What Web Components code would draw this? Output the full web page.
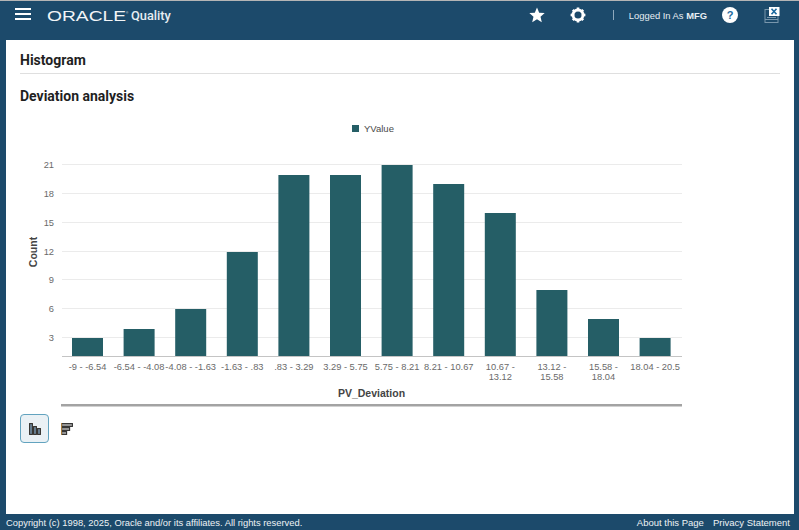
<!DOCTYPE html>
<html lang="en">
<head>
<meta charset="utf-8">
<title>Histogram</title>
<style>
  html, body { margin: 0; height: 100%; }
  body { font-family: "Liberation Sans", Arial, sans-serif; background: #1c4a6b; }
</style>
</head>
<body>
<app-shell>
  <app-header slot="header" user="MFG"></app-header>
  <page-panel title-text="Histogram" subtitle="Deviation analysis">
    <histogram-chart></histogram-chart>
    <chart-toggle></chart-toggle>
  </page-panel>
  <app-footer slot="footer"></app-footer>
</app-shell>
<script>
class AppShell extends HTMLElement {
  constructor() {
    super();
    this.attachShadow({ mode: 'open' });
    this.shadowRoot.innerHTML = `
      <style>
        :host {
          display: flex;
          flex-direction: column;
          height: 530px;
          background: #1c4a6b;
          border-top: 1px solid #b5b5b5;
          box-sizing: border-box;
          overflow: hidden;
        }
        main { flex: 1; display: flex; min-height: 0; padding: 0 5px 0 6px; }
      </style>
      <slot name="header"></slot>
      <main><slot></slot></main>
      <slot name="footer"></slot>
    `;
  }
}
customElements.define('app-shell', AppShell);

class AppHeader extends HTMLElement {
  constructor() {
    super();
    this.attachShadow({ mode: 'open' });
    const user = this.getAttribute('user');
    this.shadowRoot.innerHTML = `
      <style>
        :host {
          display: flex;
          align-items: flex-start;
          height: 39px;
          color: #fff;
          box-sizing: border-box;
          font-family: "Liberation Sans", Arial, sans-serif;
        }
        .burger { display: block; margin: 7px 0 0 15px; width: 16px; height: 12px; }
        .logo { display: block; margin: 8px 0 0 16px; width: 82px; height: 13px; }
        .product { margin: 6px 0 0 2px; font: 500 12.8px/17px Roboto, "Liberation Sans", sans-serif; color: #e6edf2; }
        .tools { margin-left: auto; display: flex; align-items: flex-start; }
        svg.star { margin: 6px 0 0 0; }
        svg.gear { margin: 6px 0 0 25px; }
        .sep { width: 1px; height: 10px; margin: 9px 0 0 27px; background: #8fa9bc; }
        .login { margin: 8px 0 0 15px; font-size: 9.4px; line-height: 13px; color: #e8eef3; white-space: nowrap; }
        .login b { font-weight: bold; }
        svg.help { margin: 6px 0 0 15px; }
        svg.close { margin: 6px 19px 0 26px; }
      </style>
      <svg class="burger" viewBox="0 0 16 12"><path d="M0 1h16M0 6h16M0 11h16" stroke="#fff" stroke-width="2" fill="none"/></svg>
      <svg class="logo" viewBox="0 0 82 13">
        <text x="0" y="11.5" font-family="'Liberation Sans', sans-serif" font-size="14" fill="#f2f5f7" textLength="79" lengthAdjust="spacingAndGlyphs">ORACLE</text>
        <text x="79" y="5" font-family="'Liberation Sans', sans-serif" font-size="3" fill="#f2f5f7">®</text>
      </svg>
      <span class="product">Quality</span>
      <div class="tools">
        <svg class="star" width="16" height="16" viewBox="0 0 16 16"><path d="M8 .6l2.2 5.1 5.5.4-4.2 3.6 1.3 5.5L8 12.3l-4.8 2.9 1.3-5.5L.3 6.1l5.5-.4z" fill="#fff"/></svg>
        <svg class="gear" width="16" height="16" viewBox="0 0 16 16">
          <circle cx="8" cy="8" r="5" fill="none" stroke="#fff" stroke-width="3"/>
          <path d="M8 8V.6M8 8v7.4M8 8H.6M8 8h7.4M8 8L2.8 2.8M8 8l5.2 5.2M8 8l5.2-5.2M8 8l-5.2 5.2" stroke="#fff" stroke-width="2.6"/>
          <circle cx="8" cy="8" r="3.5" fill="#1c4a6b"/>
        </svg>
        <span class="sep"></span>
        <span class="login">Logged In As <b>${user}</b></span>
        <svg class="help" width="16" height="16" viewBox="0 0 16 16">
          <circle cx="8" cy="8" r="8" fill="#fff"/>
          <text x="8" y="12" text-anchor="middle" font-family="'Liberation Sans', sans-serif" font-weight="bold" font-size="11" fill="#1c6aa0">?</text>
        </svg>
        <svg class="close" width="16" height="17" viewBox="0 0 16 17">
          <rect x="1" y="2.5" width="13" height="13" fill="none" stroke="#7896ac" stroke-width="1"/>
          <path d="M1 12.5h13M3 10.5h9" stroke="#7896ac"/>
          <rect x="5" y="0" width="10.5" height="9" fill="#fff"/>
          <path d="M7.5 1.7l5 5.6M12.5 1.7l-5 5.6" stroke="#1c6aa0" stroke-width="1.6"/>
        </svg>
      </div>
    `;
  }
}
customElements.define('app-header', AppHeader);

class PagePanel extends HTMLElement {
  constructor() {
    super();
    this.attachShadow({ mode: 'open' });
    this.shadowRoot.innerHTML = `
      <style>
        :host {
          display: block;
          flex: 1;
          background: #fff;
          padding: 0 14px;
          box-sizing: border-box;
          color: #1f1f1f;
          font-family: Roboto, "Liberation Sans", sans-serif;
        }
        h1, h2 { margin: 0; font-size: 14px; font-weight: 700; }
        h1 { height: 33px; line-height: 41px; border-bottom: 1px solid #dfdfdf; }
        h2 { height: 38px; line-height: 45px; }
      </style>
      <h1>${this.getAttribute('title-text')}</h1>
      <h2>${this.getAttribute('subtitle')}</h2>
      <slot></slot>
    `;
  }
}
customElements.define('page-panel', PagePanel);

class HistogramChart extends HTMLElement {
  constructor() {
    super();
    this.attachShadow({ mode: 'open' });
    const bins = [
      [['-9 - -6.54'], 3], [['-6.54 - -4.08'], 4], [['-4.08 - -1.63'], 6], [['-1.63 - .83'], 12],
      [['.83 - 3.29'], 20], [['3.29 - 5.75'], 20], [['5.75 - 8.21'], 21], [['8.21 - 10.67'], 19],
      [['10.67 -', '13.12'], 16], [['13.12 -', '15.58'], 8], [['15.58 -', '18.04'], 5], [['18.04 - 20.5'], 3],
    ];
    // the value axis does not start at zero: 3 sits 18px above the base line
    const base = 356, step = 9.62, yOf = v => 367 - v * step;
    let grid = '', bars = '', labels = '';
    for (let v = 3; v <= 21; v += 3) {
      const y = Math.round(yOf(v)) - 0.5;
      grid += `<path d="M62 ${y}H682" stroke="#ebebeb"/>`;
      labels += `<text x="54" y="${y + 3.5}" text-anchor="end" class="tick">${v}</text>`;
    }
    bins.forEach(([label, value], i) => {
      const left = 72 + i * 51.6;
      const top = Math.round(yOf(value));
      bars += `<rect x="${left.toFixed(1)}" y="${top}" width="31" height="${base - top}" fill="#255e66"/>`;
      const cx = left + 15.5;
      label.forEach((line, j) => {
        labels += `<text x="${cx.toFixed(1)}" y="${370 + j * 10}" text-anchor="middle" class="tick">${line}</text>`;
      });
    });
    this.shadowRoot.innerHTML = `
      <style>
        :host { display: block; height: 296px; margin: 0 -14px; }
        svg { display: block; }
        text { font-family: "Liberation Sans", Arial, sans-serif; }
        .tick { font-size: 9.3px; fill: #6a6a6a; }
        .legend { font-size: 9.5px; fill: #4a4a4a; }
        .title { font-size: 10.5px; font-weight: bold; fill: #444; }
      </style>
      <svg width="788" height="296" viewBox="6 112 788 296">
        <rect x="352" y="125" width="7" height="7" fill="#255e66"/>
        <text x="364" y="131.5" class="legend">YValue</text>
        ${grid}
        ${bars}
        <path d="M62 356.5H682" stroke="#c4c4c4"/>
        ${labels}
        <text x="36.5" y="252" class="title" text-anchor="middle" transform="rotate(-90 36.5 252)">Count</text>
        <text x="371.5" y="396.5" class="title" text-anchor="middle">PV_Deviation</text>
        <rect x="61" y="404" width="621" height="2.5" fill="#a3a3a3"/>
      </svg>
    `;
  }
}
customElements.define('histogram-chart', HistogramChart);

class ChartToggle extends HTMLElement {
  constructor() {
    super();
    this.attachShadow({ mode: 'open' });
    this.shadowRoot.innerHTML = `
      <style>
        :host { display: flex; align-items: center; gap: 12px; margin-top: 6px; }
        .btn {
          width: 29px; height: 29px; box-sizing: border-box;
          display: flex; align-items: center; justify-content: center;
        }
        .on { background: #eaf1f5; border: 1.5px solid #62a3bf; border-radius: 4px; }
        .plain { width: 12px; }
        svg { display: block; }
      </style>
      <div class="btn on">
        <svg width="12" height="12" viewBox="0 0 12 12" fill="#6f8aa0" stroke="#33302c" stroke-width="1.1">
          <rect x=".6" y=".6" width="2.8" height="10.8"/>
          <rect x="4.6" y="3.6" width="2.8" height="7.8"/>
          <rect x="8.6" y="5.6" width="2.8" height="5.8"/>
        </svg>
      </div>
      <div class="btn plain">
        <svg width="12" height="12" viewBox="0 0 12 12" fill="#a6a6a6" stroke="#2f2f2f" stroke-width="1.1">
          <rect x=".6" y=".6" width="10.8" height="2.8"/>
          <rect x=".6" y="4.6" width="8" height="2.8"/>
          <rect x=".6" y="8.6" width="5" height="2.8"/>
          <path d="M.3 0v12" stroke="#e8a33d" stroke-width=".8"/>
        </svg>
      </div>
    `;
  }
}
customElements.define('chart-toggle', ChartToggle);

class AppFooter extends HTMLElement {
  constructor() {
    super();
    this.attachShadow({ mode: 'open' });
    this.shadowRoot.innerHTML = `
      <style>
        :host {
          display: flex;
          justify-content: space-between;
          height: 16px;
          padding: 0 9px 0 6px;
          font: 9.5px/18px "Liberation Sans", Arial, sans-serif;
          color: #eef2f5;
          white-space: nowrap;
        }
        .copy { font-size: 9.4px; }
        nav { display: flex; gap: 9px; }
      </style>
      <span class="copy">Copyright (c) 1998, 2025, Oracle and/or its affiliates. All rights reserved.</span>
      <nav><span>About this Page</span><span>Privacy Statement</span></nav>
    `;
  }
}
customElements.define('app-footer', AppFooter);
</script>
</body>
</html>
